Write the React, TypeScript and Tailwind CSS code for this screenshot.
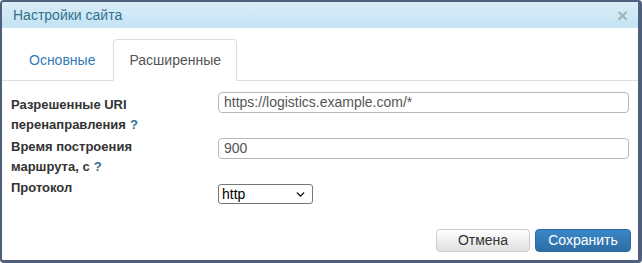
import { ChevronDown } from "lucide-react"

const font = { fontFamily: '"Liberation Sans", Arial, sans-serif' }

const Help = () => <span className="text-[#31708f] ml-1">?</span>

export default function App() {
  return (
    <div className="w-[642px] h-[263px] bg-white" style={font}>
      <div className="h-full flex flex-col rounded-[4px] border-t-2 border-l-2 border-r-[4px] border-b-[3px] border-[#4f5e7c] bg-white overflow-hidden">
        {/* Title bar */}
        <div className="h-[26px] shrink-0 flex items-center justify-between pl-[11px] pr-[10px] pt-px bg-gradient-to-b from-[#d9edf7] to-[#c4e3f3] text-[#31708f] text-[14px]">
          <span>Настройки сайта</span>
          <span className="text-[#a4b2ba] font-bold text-[19px] leading-none">×</span>
        </div>

        {/* Tabs */}
        <div className="mt-[11px] flex border-b border-[#dddddd] pl-[11px] text-[14px] leading-5">
          <div className="px-[15px] py-[10px] text-[#337ab7] border border-transparent -mb-px mr-[2px]">Основные</div>
          <div className="px-[15px] py-[10px] text-[#555555] bg-white border border-[#dddddd] border-b-transparent rounded-t-[4px] -mb-px">
            Расширенные
          </div>
        </div>

        {/* Form */}
        <div className="flex flex-col px-[9px] pt-[11px] text-[13px] text-[#333333]">
          <div className="flex items-start">
            <div className="w-[207px] font-bold leading-5 pt-[3px]">
              Разрешенные URI
              <br />
              перенаправления<Help />
            </div>
            <input
              readOnly
              value="https://logistics.example.com/*"
              className="w-[411px] h-[21px] border border-[#b8b8b8] rounded-[4px] px-[5px] text-[14px] text-[#555555] outline-none"
            />
          </div>
          <div className="flex items-start mt-[2px]">
            <div className="w-[207px] font-bold leading-5">
              Время построения
              <br />
              маршрута, с<Help />
            </div>
            <input
              readOnly
              value="900"
              className="mt-px w-[411px] h-[21px] border border-[#b8b8b8] rounded-[4px] px-[5px] text-[14px] text-[#555555] outline-none"
            />
          </div>
          <div className="flex items-start mt-px">
            <div className="w-[207px] font-bold leading-5">Протокол</div>
            <div className="mt-[6px] w-[95px] h-[20px] flex items-center justify-between border border-[#767676] rounded-[3px] pl-[3px] pr-[5px] text-[14px] text-black font-normal">
              <span>http</span>
              <ChevronDown size={13} strokeWidth={2.5} />
            </div>
          </div>
        </div>

        {/* Footer */}
        <div className="mt-auto flex justify-end gap-[5px] pr-[7px] pb-[8px]">
          <button className="h-[23px] w-[94px] rounded-[4px] border border-[#cccccc] bg-gradient-to-b from-white to-[#e0e0e0] text-[14px] text-[#333333]">
            Отмена
          </button>
          <button className="h-[23px] w-[96px] rounded-[4px] border border-[#2d6ca2] bg-gradient-to-b from-[#3a87c8] to-[#2e6da4] text-[14px] text-white">
            Сохранить
          </button>
        </div>
      </div>
    </div>
  )
}
